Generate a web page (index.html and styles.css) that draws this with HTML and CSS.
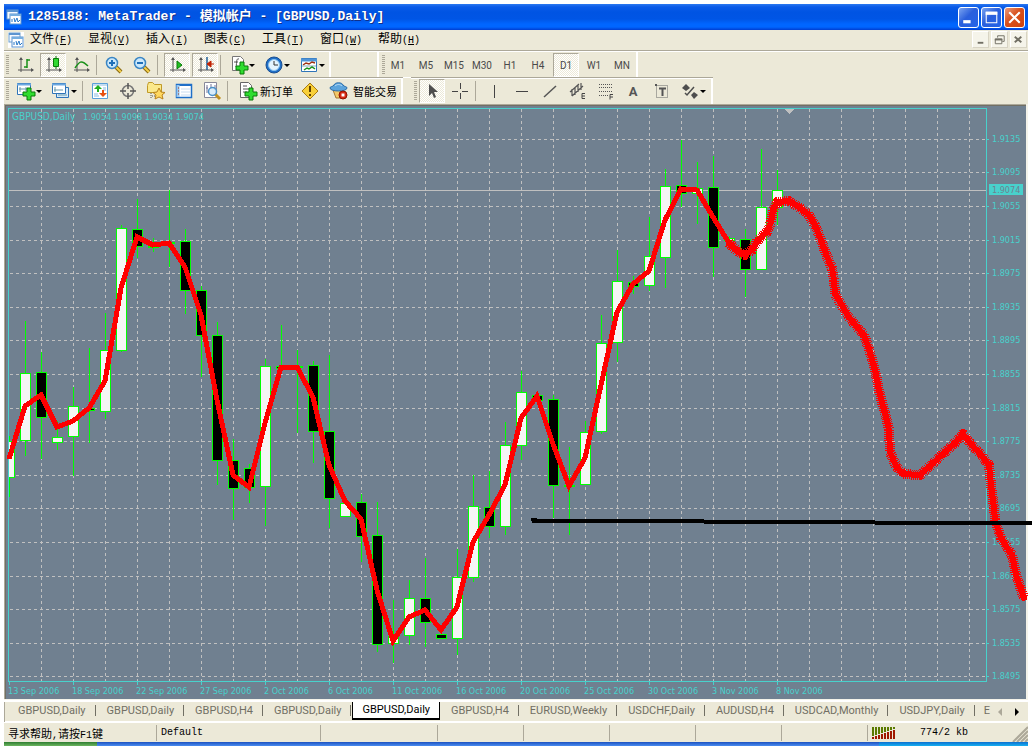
FILE: index.html
```html
<!DOCTYPE html>
<html lang="zh-CN">
<head>
<meta charset="utf-8">
<title>1285188: MetaTrader - 模拟帐户 - [GBPUSD,Daily]</title>
<link rel="stylesheet" href="styles.css">
</head>
<body>
<svg class="defs" aria-hidden="true">
  <defs>
    <g id="axes"><path d="M5 2v14M2 14h15" stroke="#555" fill="none"/><path d="M5 1 3 4h4zM18 14l-3-2v4z" fill="#555"/></g>
    <g id="plus"><path d="M10 5h4v4h4v4h-4v4h-4v-4H6V9h4z" transform="translate(0 1)" fill="#2fdc2f" stroke="#087a08"/></g>
    <g id="logo"><rect x="1" y="1" width="11" height="9" fill="#f4f9ff" stroke="#6c9fd0"/><path d="M1 2h11" stroke="#5c94d0" stroke-width="2"/><rect x="4" y="5" width="11" height="10" fill="#fff" stroke="#5c94d0"/><path d="M4 6h11" stroke="#76aee0" stroke-width="2"/><path d="M6 10v3M8 9l1 4 2-4 1 4 2-2" stroke="#2878c8" fill="none"/></g>
    <g id="lens"><path d="m11 11 5 5" stroke="#8a6a10" stroke-width="4"/><path d="m11 11 5 5" stroke="#f4cf4c" stroke-width="2"/><circle cx="7" cy="7" r="5.5" fill="#cbe8fb" stroke="#3b86c4" stroke-width="1.5"/></g>
  </defs>
</svg>
<div class="app">
  <header class="title-bar">
    <svg class="ico16" viewBox="0 0 16 16"><use href="#logo"/></svg>
    <h1 class="title">1285188: MetaTrader - 模拟帐户 - [GBPUSD,Daily]</h1>
    <button class="win-btn" aria-label="最小化"><svg viewBox="0 0 18 18"><path d="M4 13h7" stroke="#fff" stroke-width="3"/></svg></button>
    <button class="win-btn" aria-label="最大化"><svg viewBox="0 0 18 18"><path d="M4 4h10v10H4z" fill="none" stroke="#fff"/><path d="M3.500 5h11" stroke="#fff" stroke-width="3"/></svg></button>
    <button class="win-btn win-close" aria-label="关闭"><svg viewBox="0 0 18 18"><path d="m4 4 10 10M14 4 4 14" stroke="#fff" stroke-width="2"/></svg></button>
  </header>

  <nav class="menu-bar">
    <svg class="ico16 menu-logo" viewBox="0 0 16 16"><use href="#logo"/></svg>
    <button class="menu">文件<span>(<u>F</u>)</span></button>
    <button class="menu">显视<span>(<u>V</u>)</span></button>
    <button class="menu">插入<span>(<u>I</u>)</span></button>
    <button class="menu">图表<span>(<u>C</u>)</span></button>
    <button class="menu">工具<span>(<u>T</u>)</span></button>
    <button class="menu">窗口<span>(<u>W</u>)</span></button>
    <button class="menu">帮助<span>(<u>H</u>)</span></button>
    <div class="mdi">
      <button aria-label="最小化图表"><svg viewBox="0 0 16 16"><path d="M5 11.500h6" stroke="#716f64" stroke-width="2"/></svg></button>
      <button aria-label="还原图表"><svg viewBox="0 0 16 16"><path d="M6 6V4h7v6h-2" fill="none" stroke="#716f64"/><path d="M3.500 7.500h7v5h-7z" fill="none" stroke="#716f64"/><path d="M3 8h8" stroke="#716f64" stroke-width="2"/></svg></button>
      <button aria-label="关闭图表"><svg viewBox="0 0 16 16"><path d="m4 5 7 6M11 5l-7 6" stroke="#716f64" stroke-width="2"/></svg></button>
    </div>
  </nav>

  <div class="toolbar">
    <div class="group lead">
      <i class="grip"></i>
      <button class="tool" aria-label="柱状图"><svg viewBox="0 0 18 18"><use href="#axes"/><path d="M11 3v9M11 4h3M8 11h3" stroke="#189018" stroke-width="1.500"/></svg></button>
      <button class="tool on" aria-label="蜡烛图"><svg viewBox="0 0 18 18"><use href="#axes"/><path d="M12 0v13" stroke="#087a08"/><path d="M9.500 2.500h5v8h-5z" fill="#30d830" stroke="#087a08"/></svg></button>
      <button class="tool" aria-label="折线图"><svg viewBox="0 0 18 18"><use href="#axes"/><path d="M3 12C7 6 9 3 16 10" stroke="#189018" fill="none" stroke-width="1.500"/></svg></button>
      <i class="sep"></i>
      <button class="tool" aria-label="放大"><svg viewBox="0 0 18 18"><use href="#lens"/><path d="M4 7h6M7 4v6" stroke="#1f6fb8" stroke-width="2"/></svg></button>
      <button class="tool" aria-label="缩小"><svg viewBox="0 0 18 18"><use href="#lens"/><path d="M4 7h6" stroke="#1f6fb8" stroke-width="2"/></svg></button>
      <i class="sep wide"></i>
      <button class="tool on" aria-label="自动滚动"><svg viewBox="0 0 18 18"><use href="#axes"/><path d="m9 5 5 4-5 4z" fill="#20c020" stroke="#087a08"/></svg></button>
      <button class="tool on" aria-label="图表平移"><svg viewBox="0 0 18 18"><use href="#axes"/><path d="M11 1v13" stroke="#1f5f98" stroke-width="1.500"/><path d="m11 8 4-3v6zM15 8h3" fill="#c02000" stroke="#c02000"/></svg></button>
      <i class="sep"></i>
      <button class="tool drop" aria-label="技术指标"><svg viewBox="0 0 18 18"><path d="M2.500.5h8l3 3v11h-11z" fill="#fff" stroke="#777"/><path d="M9 3c-3-1-2 3-3 8M4 6h4" stroke="#555" fill="none"/><use href="#plus"/></svg></button>
      <button class="tool drop" aria-label="时间周期"><svg viewBox="0 0 18 18"><circle cx="9" cy="9" r="8" fill="#1f6fc8" stroke="#1b4f90"/><circle cx="9" cy="9" r="5.500" fill="#e4f4ff" stroke="#8cc4f0"/><path d="M9 5v4h4" stroke="#333" fill="none"/></svg></button>
      <button class="tool drop" aria-label="模板"><svg viewBox="0 0 18 18"><path d="M1.500 2.500h15v13h-15z" fill="#fff" stroke="#2f74b8"/><path d="M1 4h16" stroke="#4f94d8" stroke-width="3"/><path d="m3 9 3-2 3 1 3-2 3 1" stroke="#a03010" fill="none" stroke-width="1.500"/><path d="M2 10h14" stroke="#8ab"/><path d="m4 14 3-2 2 1 3-2 3 2" stroke="#189018" fill="none" stroke-width="1.500"/></svg></button>
    </div>
    <div class="group blank"></div>
    <div class="group frames">
      <i class="grip"></i>
      <button class="tool">M1</button><button class="tool">M5</button><button class="tool">M15</button><button class="tool">M30</button><button class="tool">H1</button><button class="tool">H4</button><button class="tool on">D1</button><button class="tool">W1</button><button class="tool">MN</button>
    </div>
  </div>

  <div class="toolbar second">
    <div class="group lead">
      <i class="grip"></i>
      <button class="tool drop" aria-label="新图表"><svg viewBox="0 0 18 18"><path d="M.5 1.500h13v11H.5z" fill="#fff" stroke="#2f74b8"/><path d="M0 2.500h14" stroke="#6ca8e0" stroke-width="2"/><path d="M3 5v5M2 7h9M9 5v4" stroke="#69a"/><use href="#plus"/></svg></button>
      <button class="tool drop" aria-label="配置"><svg viewBox="0 0 18 18"><path d="M4.500 5.500h12v10h-12z" fill="#d8ebfa" stroke="#2f74b8"/><path d="M.5 1.500h13v10H.5z" fill="#fff" stroke="#2f74b8"/><path d="M0 2.500h14" stroke="#6ca8e0" stroke-width="2"/><path d="M3 5v5M2 8h9M6 13h9" stroke="#69a"/></svg></button>
      <i class="sep"></i>
      <button class="tool" aria-label="市场报价"><svg viewBox="0 0 18 18"><path d="M1.500 1.500h15v15h-15z" fill="#fff" stroke="#5a9fd8"/><path d="M2 3h14M12 6h3M12 8h3M3 12h4M3 14h5" stroke="#8abbe0"/><path d="m7 3 4 4H8v3H6V7H3z" fill="#20b020"/><path d="m12 15-4-4h3V8h2v3h3z" fill="#e85010"/></svg></button>
      <button class="tool" aria-label="数据窗口"><svg viewBox="0 0 18 18"><circle cx="9" cy="9" r="5.500" fill="none" stroke="#777" stroke-width="1.500"/><path d="M9 1v6M9 11v6M1 9h6M11 9h6" stroke="#555" stroke-width="1.500"/></svg></button>
      <button class="tool" aria-label="导航"><svg viewBox="0 0 18 18"><path d="M.5 3.500v7h14v-8h-7l-2-2h-4z" fill="#fbe98c" stroke="#c09a28"/><path d="M4 11v6M5 14h4" stroke="#555" stroke-dasharray="1 1"/><path d="m12 6 2 4 4 .5-3 2.500 1 4-4-2-4 2 1-4-3-2.500L10 10z" fill="#ffd860" stroke="#b8821c"/></svg></button>
      <button class="tool" aria-label="终端"><svg viewBox="0 0 18 18"><path d="M1.500 2.500h15v13h-15z" fill="#fff" stroke="#1f6fc8" stroke-width="1.500"/><path d="M1 3h16" stroke="#1f6fc8" stroke-width="2"/><path d="M3 3v12" stroke="#9ac8f0" stroke-width="3"/><path d="M3 6h1M3 9h1M3 12h1" stroke="#a03010"/><path d="M6 7h9M6 10h9M6 13h9" stroke="#c8dcf0"/></svg></button>
      <button class="tool" aria-label="策略测试"><svg viewBox="0 0 18 18"><path d="M1.500.5h12v15h-12z" fill="#fff" stroke="#889"/><path d="M4 3v8M3 6h2M8 2v4M12 3v5" stroke="#779"/><path d="m12 12 5 5" stroke="#c09020" stroke-width="3"/><circle cx="9.500" cy="9.500" r="4" fill="#c4e2f8aa" stroke="#4a90c8" stroke-width="1.500"/></svg></button>
      <i class="sep"></i>
      <button class="tool text"><svg viewBox="0 0 18 18"><path d="M1.500.5h8l3 3v12h-11z" fill="#fff" stroke="#666"/><path d="M4 4h4M4 7h6M4 10h4" stroke="#555"/><use href="#plus"/></svg>新订单</button>
      <button class="tool" aria-label="编辑器"><svg viewBox="0 0 18 18"><path d="m9 1 8 8-8 8-8-8z" fill="#f8cf38" stroke="#a87a10"/><path d="M9 4v6M9 12v2" stroke="#604000" stroke-width="2"/></svg></button>
      <button class="tool text expert"><svg viewBox="0 0 18 18"><path d="M3 8h11l-2 8H6z" fill="#f4c868" stroke="#a87830"/><path d="M0 6c0-2 3-1 4-3C5 0 12 0 13 3c1 2 4 1 4 3 0 4-17 4-17 0z" fill="#5ca4dc" stroke="#2f6ea8"/><path d="M5 4c2-2 5-2 7 0" stroke="#c0e0f8" fill="none"/><circle cx="13" cy="13" r="4" fill="#d82810" stroke="#901400"/><path d="M11.500 11.500h3v3h-3z" fill="#fff"/></svg>智能交易</button>
    </div>
    <div class="group draw">
      <i class="grip"></i>
      <button class="tool on" aria-label="光标"><svg viewBox="0 0 18 18"><path d="M6 2v12l3-3 2 5 2-1-2-5h4z" fill="#4d4d4d"/></svg></button>
      <button class="tool" aria-label="十字准线"><svg viewBox="0 0 18 18"><path d="M9.500 1v6M9.500 11v6M1 9.500h6M11 9.500h6" stroke="#444"/></svg></button>
      <i class="sep"></i>
      <button class="tool" aria-label="垂直线"><svg viewBox="0 0 18 18"><path d="M10.500 3v13" stroke="#444"/></svg></button>
      <button class="tool" aria-label="水平线"><svg viewBox="0 0 18 18"><path d="M4 9.500h12" stroke="#444"/></svg></button>
      <button class="tool" aria-label="趋势线"><svg viewBox="0 0 18 18"><path d="M4 15 16 4" stroke="#555" stroke-width="1.500"/></svg></button>
      <button class="tool" aria-label="等距通道"><svg viewBox="0 0 18 18"><path d="m2 10 9-8M4 14 15 4M4 7v7M7 6v7M10 3v7M13 1v7" stroke="#555" stroke-width="1.200"/><path d="M17 11.500h-3v5h3M14 14h3" stroke="#444" fill="none"/></svg></button>
      <button class="tool" aria-label="斐波纳契"><svg viewBox="0 0 18 18"><path d="M3 2.500h14M3 5.500h14M3 9.500h14M3 13.500h9" stroke="#555" stroke-dasharray="1 1"/><path d="M17 12.500h-3v5M14 15h3" stroke="#444" fill="none"/></svg></button>
      <button class="tool letter" aria-label="文字">A</button>
      <button class="tool" aria-label="文字标签"><svg viewBox="0 0 18 18"><path d="M4.500 3.500h11v12h-11z" fill="none" stroke="#666" stroke-dasharray="1 1"/><path d="M7 6.500h7M10.500 6v8" stroke="#555" stroke-width="2"/><path d="M3 2h2v2H3z" fill="#555"/></svg></button>
      <button class="tool drop" aria-label="箭头"><svg viewBox="0 0 18 18"><path d="m5 2 4 4-4 3-4-3zM10 13l3-3 4 3-4 4z" fill="#4d4d4d"/><path d="m4 11 2 2 7-8" stroke="#4d4d4d" stroke-width="1.500" fill="none"/></svg></button>
    </div>
  </div>

  <main class="chart">
    <svg id="chart" viewBox="0 104 1032 596" role="img" aria-label="GBPUSD,Daily">
      <path class="edge-light" d="M4 104h1024v596H4z"/>
      <path class="edge-mid" d="M4 104h1022v595H4z"/>
      <path class="edge-dark" d="M5 105h1021v594H5z"/>
      <path class="paper" d="M6 106h1020v593H6z"/>
      <g id="grid"></g>
      <g id="candles"></g>
      <path class="frame" d="M8.500 681V108.500H986.500V681.500H8"/>
      <path class="shift" d="M785 109h9l-4 5h-1z"/>
      <text class="symbol" x="12" y="120">GBPUSD,Daily</text>
      <text class="tick" x="83" y="120">1.9054 1.9098 1.9034 1.9074</text>
      <g id="labels"></g>
      <path class="average" id="average"/>
      <path class="brush" id="brush"/>
      <path class="brush rough" id="rough"/>
      <path class="support" d="M531 518h6v1h167v1h171v1h157v4H875v-1H704v-1H532z"/>
    </svg>
  </main>

  <div class="tabs">
    <div class="tab-list" role="tablist">
      <button role="tab">GBPUSD,Daily</button><button role="tab">GBPUSD,Daily</button><button role="tab">GBPUSD,H4</button><button role="tab">GBPUSD,Daily</button><button role="tab" class="active" aria-selected="true">GBPUSD,Daily</button><button role="tab">GBPUSD,H4</button><button role="tab">EURUSD,Weekly</button><button role="tab">USDCHF,Daily</button><button role="tab">AUDUSD,H4</button><button role="tab">USDCAD,Monthly</button><button role="tab">USDJPY,Daily</button><button role="tab" class="partial">E</button>
    </div>
    <button class="scroll" aria-label="向左"><svg viewBox="0 0 8 8"><path d="M6 0v8L2 4z" fill="#aca899"/></svg></button>
    <button class="scroll" aria-label="向右"><svg viewBox="0 0 8 8"><path d="M2 0v8l4-4z" fill="#000"/></svg></button>
  </div>

  <footer class="status">
    <span class="cell help">寻求帮助<b>,</b>请按<b>F1</b>键</span>
    <span class="cell">Default</span>
    <span class="cell"></span><span class="cell"></span><span class="cell"></span><span class="cell"></span><span class="cell"></span><span class="cell"></span>
    <span class="cell traffic"><svg class="bars" viewBox="0 0 24 12"><path d="M1 0v9M4 0v8M7 0v7M10 0v6M13 0v5M16 0v4M19 0v3M22 0v2" stroke="#5a7a00" stroke-width="2"/><path d="M1 10v2M4 9v3M7 8v4M10 7v5M13 6v6M16 5v7M19 4v8M22 3v9" stroke="#a01800" stroke-width="2"/></svg>774/2 kb
      <svg class="resize" viewBox="0 0 16 16"><path d="M1 16 16 1M5 16 16 5M9 16l7-7M13 16l3-3" stroke="#aca899" stroke-width="2"/></svg></span>
  </footer>
  <div class="taskbar"><i class="start"></i><i class="tasks"></i><i class="tray"></i></div>
</div>
<script src="chart.js"></script>
</body>
</html>
```

FILE: styles.css
```css
* { box-sizing: border-box; }
body { margin: 0; background: #fff; font-family: Roboto, "Noto Sans CJK SC", sans-serif; font-size: 11px; color: #000; }
button { margin: 0; padding: 0; border: 0; background: none; font: inherit; color: inherit; }
.defs { position: absolute; width: 0; height: 0; }
.app { padding-top: 4px; }
.ico16 { width: 16px; height: 16px; flex: none; }

.title-bar {
  display: flex; align-items: center; gap: 2px; height: 26px; margin: 0 4px; padding: 0 3px 0 2px;
  background: linear-gradient(#2b78f0 0, #0a5be8 3px, #0054e3 8px, #0055e5 15px, #0066ff 20px, #0066ff 23px, #003dd0 26px);
}
.title {
  flex: 1; margin: 0 0 0 4px; overflow: hidden; white-space: nowrap; color: #fff;
  font: bold 13px/20px "Liberation Mono", "Noto Sans CJK SC", monospace; text-shadow: 1px 1px #10308a;
}
.win-btn {
  width: 21px; height: 21px; border: 1px solid #fff; border-radius: 3px;
  background: linear-gradient(135deg, #7ba4f0, #2a5fdc 45%, #2464e8);
}
.win-btn svg { display: block; width: 19px; height: 19px; }
.win-close { background: linear-gradient(135deg, #eb9b7c, #d8501c 45%, #d0440c); }

.menu-bar {
  display: flex; align-items: center; height: 22px; margin: 0 4px; padding: 0 1px 2px 4px;
  background: #ece9d8; border-bottom: 1px solid #fff; box-shadow: inset 0 -1px #aca899;
}
.menu-logo { background: #fff; margin-right: 2px; }
.menu { width: 58px; padding-left: 4px; text-align: left; font: 12px/18px "Noto Sans CJK SC", sans-serif; white-space: nowrap; }
.menu span { font: 10px/18px "Liberation Mono", monospace; }
.mdi { margin-left: auto; display: flex; gap: 2px; }
.mdi button { width: 17px; height: 17px; background: #f5f4ea; border: 1px solid; border-color: #fff #d8d4c4 #d8d4c4 #fff; }
.mdi svg { display: block; width: 15px; height: 15px; }

.toolbar { display: flex; height: 26px; margin: 0 4px; background: #ece9d8; color: #4a4a4a; }
.group { display: flex; align-items: center; gap: 2px; flex: none; border-right: 2px solid; border-image: linear-gradient(90deg, #aca899 50%, #fff 50%) 2; border-width: 0 2px 0 0; box-shadow: inset 0 -1px #fff; }
.second .group { box-shadow: inset 0 1px #fff, 0 -1px #aca899; }
.lead { padding: 0 1px 0 2px; }
.second .lead { padding-right: 4px; }
.blank { width: 48px; }
.frames, .draw { padding: 0 1px 0 3px; font-size: 10px; }
.frames .grip { margin-right: -2px; }
.draw { margin-left: 8px; padding-right: 2px; border-width: 0 2px; }
.grip { width: 3px; height: 20px; background: repeating-linear-gradient(#aca899 0 1px, #ece9d8 1px 2px); }
.lead .grip { margin-right: 1px; }
.sep { width: 3px; height: 20px; border-left: 1px solid #aca899; background: #ece9d8; }
.wide { width: 5px; }
.tool { display: flex; align-items: center; justify-content: center; width: 26px; height: 24px; flex: none; }
.tool svg { width: 18px; height: 18px; flex: none; overflow: visible; }
.on {
  border: 1px solid; border-color: #aca899 #fff #fff #aca899;
  background: repeating-conic-gradient(#fff 0 25%, #ece9d8 0 50%) 0 0 / 2px 2px;
}
.drop { width: 33px; justify-content: flex-start; padding-left: 5px; }
.drop::after { content: ""; margin-left: 1px; border: 3px solid transparent; border-top-color: #000; border-bottom: 0; }
.letter { font-weight: bold; font-size: 13px; color: #555; }
.text { width: auto; padding: 0 2px 0 7px; gap: 3px; color: #000; font: 11px/20px "Noto Sans CJK SC", sans-serif; }
.expert { padding-left: 5px; padding-right: 0; gap: 5px; }

.chart svg { display: block; width: 100%; height: auto; }
.chart path, .chart rect { shape-rendering: crispEdges; }
.edge-light { fill: #f4f3ea; }
.edge-mid { fill: #aca899; }
.edge-dark { fill: #716f64; }
.paper { fill: #708090; }
.grid-line { stroke: #c0c0c0; stroke-dasharray: 3 3; fill: none; }
.price-line { stroke: #c0c0c0; fill: none; }
.frame { fill: none; stroke: #48d1cc; }
.shift { fill: #c0c0c0; }
.symbol, .tick { fill: #48d1cc; font-family: "DejaVu Sans Condensed", "DejaVu Sans", sans-serif; font-size: 9px; white-space: pre; }
.symbol { font-size: 10px; }
.price-tag { fill: #48d1cc; }
.tick.current { fill: #708090; }
.wick { stroke: #0f0; fill: none; }
.bull { fill: #f5f5f5; stroke: #0f0; }
.bear { fill: #000; stroke: #0f0; }
.average { fill: none; stroke: #f00; stroke-width: 5; }
.brush { fill: none; stroke: #f00; stroke-width: 6; stroke-linecap: round; stroke-linejoin: round; }
.rough { stroke-width: 10; stroke-dasharray: 1 1; stroke-linecap: butt; }
.support { fill: #000; }

.tabs { display: flex; align-items: stretch; height: 22px; margin: 0 4px; padding: 0 3px 0 0; background: #ece9d8; border-top: 2px solid #000; border-image: linear-gradient(#fff 50%, #000 50%) 2; border-width: 2px 0 0; box-shadow: inset 0 -1px #fff; }
.tab-list { display: flex; gap: 1px; flex: 1; min-width: 0; overflow: hidden; padding-left: 4px; color: #716f64; box-shadow: inset 1px 0 #aca899; }
.tab-list button { position: relative; flex: none; height: 18px; padding: 0 10px; line-height: 16px; }
.tab-list button::after { content: ""; position: absolute; right: 0; top: 3px; height: 11px; border-right: 1px solid #716f64; }
.tab-list .active { background: #fff; color: #000; border: 1px solid #000; border-top: 0; border-bottom-width: 2px; padding: 0 9px; }
.tab-list .active::after, .tab-list .partial::after { content: none; }
.tab-list .partial { padding: 0 0 0 8px; }
.scroll { width: 17px; }
.scroll svg { width: 8px; height: 8px; }

.status {
  display: grid; grid-template-columns: 153px 164px 117px 86px 86px 86px 86px 86px 1fr;
  height: 20px; margin: 0 4px; background: #ece9d8; border-top: 1px solid #fff;
  font: 10px/16px "Liberation Mono", monospace;
}
.cell { margin: 2px 0 1px; padding-left: 4px; border-right: 1px solid #aca899; white-space: nowrap; overflow: hidden; }
.help { font: 11px/16px "Noto Sans CJK SC", sans-serif; }
.help b { font: 10px/16px "Liberation Mono", monospace; }
.traffic { display: flex; align-items: center; border: 0; margin: 0; padding-left: 4px; }
.bars { width: 24px; height: 12px; margin-right: 24px; }
.resize { width: 16px; height: 16px; margin-left: auto; align-self: flex-end; }

.taskbar { display: flex; height: 4px; margin: 0 4px; }
.start { width: 93px; background: linear-gradient(#2f7d32, #6cb560); }
.tasks { flex: 1; background: linear-gradient(#1d52c0, #4a8cf0); }
.tray { width: 149px; background: linear-gradient(#0c6fd0, #17b0f0); }
```

FILE: chart.js
```js
const NS = 'http://www.w3.org/2000/svg';
const add = (parent, tag, attrs, text) => {
  const el = document.createElementNS(NS, tag);
  for (const k in attrs) el.setAttribute(k, attrs[k]);
  if (text) el.textContent = text;
  document.getElementById(parent).appendChild(el);
};

const rows = [139, 172, 206, 240, 273, 307, 340, 374, 408, 441, 475, 508, 542, 576, 609, 643, 676];
rows.forEach((y, i) => {
  add('grid', 'path', { class: 'grid-line', d: `M10 ${y + 0.5}H986` });
  add('labels', 'path', { class: 'frame', d: `M986 ${y + 0.5}h3` });
  add('labels', 'text', { class: 'tick', x: 992, y: y + 3 }, (1.9135 - i * 0.004).toFixed(4));
});
for (let x = 41; x < 986; x += 32) add('grid', 'path', { class: 'grid-line', d: `M${x + 0.5} 109V681` });
add('grid', 'path', { class: 'price-line', d: 'M9 190.5H986' });
add('labels', 'rect', { class: 'price-tag', x: 989, y: 184, width: 34, height: 11 });
add('labels', 'text', { class: 'tick current', x: 992, y: 193 }, '1.9074');

['13 Sep', '18 Sep', '22 Sep', '27 Sep', '2 Oct', '6 Oct', '11 Oct', '16 Oct', '20 Oct', '25 Oct', '30 Oct', '3 Nov', '8 Nov']
  .forEach((d, i) => {
    add('labels', 'path', { class: 'frame', d: `M${9.5 + 64 * i} 682v3` });
    add('labels', 'text', { class: 'tick', x: 8 + 64 * i, y: 694 }, d + ' 2006');
  });

// [rising, body top, body bottom, high, low]
const candles = [
  [1,441,477,436,497],[1,373,440,321,456],[0,372,417,352,459],[1,437,442,421,450],[1,406,436,387,476],
  [0,408,410,348,443],[1,350,411,313,419],[1,228,350,225,352],[0,229,246,199,258],[1,246,247,238,252],
  [0,242,243,190,267],[0,241,290,229,314],[0,290,335,286,377],[0,335,460,322,485],[0,460,488,439,520],
  [0,468,487,464,503],[1,366,486,359,526],[0,366,368,325,368],[1,366,367,350,433],[0,365,431,361,463],
  [0,431,498,355,528],[1,503,516,500,517],[0,502,536,494,562],[0,535,644,502,652],[1,636,643,600,663],
  [1,598,635,580,645],[0,598,622,558,647],[0,634,638,632,638],[1,577,638,549,655],[1,506,577,475,582],
  [0,507,526,471,538],[1,445,526,422,535],[1,392,445,371,460],[0,395,400,394,405],[0,399,485,395,518],
  [1,485,486,447,535],[1,432,484,421,485],[1,343,431,315,434],[1,281,342,250,362],[0,282,286,276,294],
  [1,256,285,217,291],[1,186,257,169,288],[0,185,193,140,207],[1,188,193,162,224],[0,187,247,156,277],
  [1,238,240,236,240],[0,239,269,229,297],[1,207,269,149,269],[1,190,207,170,225]
];
candles.forEach(([up, top, bottom, high, low], i) => {
  const x = 9 + 16 * i;
  const left = Math.max(x - 5, 8);
  add('candles', 'path', { class: 'wick', d: `M${x + 0.5} ${high}V${low}` });
  add('candles', 'rect', { class: up ? 'bull' : 'bear', x: left + 0.5, y: top + 0.5, width: x + 5 - left, height: bottom - top });
});

const average = [459,406,395,427,421,408,381,288,237,245,243,267,315,400,475,487,423,367,367,397,465,501,519,590,641,617,610,630,607,542,515,485,418,396,444,486,458,385,312,284,271,220,189,190,217,243,255];
document.getElementById('average').setAttribute('d', 'M' + average.map((y, i) => `${9 + 16 * i} ${y}`).join('L'));

const forecast = 'M729 243L737 251 745 255 752 250 757 241 767 232 771 222 773 210 777 202 789 201 800 208 808 214 815 225 821 240 826 254 832 268 834 280 835 294 841 304 848 316 856 326 864 335 869 349 875 370 880 395 885 413 889 430 890 452 896 466 903 474 920 475 930 466 944 453 955 443 963 434 970 443 982 456 989 465 991 485 994 508 995 520 1001 538 1012 555 1016 575 1024 598';
document.getElementById('brush').setAttribute('d', forecast);
document.getElementById('rough').setAttribute('d', forecast);
```
